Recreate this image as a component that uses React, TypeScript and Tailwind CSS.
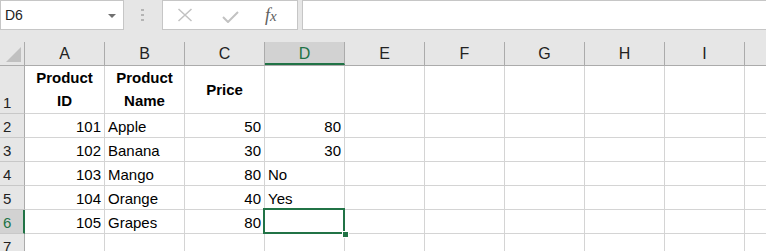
import React from "react";

const FONT = { fontFamily: '"Liberation Sans", Arial, sans-serif' };

const colLetters = ["A", "B", "C", "D", "E", "F", "G", "H", "I", ""];

type Cell = { v?: string; align?: "l" | "r"; bold?: boolean };

const rows: Cell[][] = [
  [{ v: "101", align: "r" }, { v: "Apple" }, { v: "50", align: "r" }, { v: "80", align: "r" }],
  [{ v: "102", align: "r" }, { v: "Banana" }, { v: "30", align: "r" }, { v: "30", align: "r" }],
  [{ v: "103", align: "r" }, { v: "Mango" }, { v: "80", align: "r" }, { v: "No" }],
  [{ v: "104", align: "r" }, { v: "Orange" }, { v: "40", align: "r" }, { v: "Yes" }],
  [{ v: "105", align: "r" }, { v: "Grapes" }, { v: "80", align: "r" }, {}],
];

function RowHeader({ n, sel, h }: { n: string; sel?: boolean; h: string }) {
  return (
    <div
      className={`${h} w-[25px] shrink-0 flex items-end pl-[3px] pb-[1px] text-[15px] leading-[18px] border-b border-[#c8c8c8] ${
        sel ? "bg-[#d2d2d2] text-[#217346] border-r-2 border-r-[#217346]" : "bg-[#e6e6e6] text-[#222] border-r border-r-[#ababab]"
      }`}
    >
      {n}
    </div>
  );
}

function GridCell({ c, selected }: { c?: Cell; selected?: boolean }) {
  return (
    <div
      className={`relative w-[80px] shrink-0 h-full border-r border-b border-[#d4d4d4] flex items-end px-[3px] pb-[1px] text-[15px] leading-[18px] text-black ${
        c?.align === "r" ? "justify-end" : "justify-start"
      } ${selected ? "z-10" : ""}`}
    >
      {c?.v}
      {selected && (
        <>
          <div className="absolute left-[-2px] top-[-2px] w-[82px] h-[26px] border-2 border-[#217346]" />
          <div className="absolute right-[-5px] bottom-[-5px] w-[7px] h-[7px] bg-[#217346] border border-white" />
        </>
      )}
    </div>
  );
}

export default function App() {
  return (
    <div className="w-[766px] h-[251px] overflow-hidden bg-white select-none" style={FONT}>
      {/* Formula bar area */}
      <div className="h-[42px] bg-[#e6e6e6] flex items-start">
        <div className="relative w-[124px] h-[30px] bg-white border border-[#c6c6c6] flex items-center pl-[4px] text-[14px] text-[#222]">
          D6
          <svg className="absolute left-[107px] top-[13px]" width="8" height="4" viewBox="0 0 8 4">
            <polygon points="0,0 8,0 4,4" fill="#707070" />
          </svg>
        </div>
        <div className="w-[38px] h-[30px] flex flex-col items-center justify-center gap-[3px] pr-[2px]">
          <div className="w-[3px] h-[2px] bg-[#b4b4b4]" />
          <div className="w-[3px] h-[2px] bg-[#b4b4b4]" />
          <div className="w-[3px] h-[2px] bg-[#b4b4b4]" />
        </div>
        <div className="w-[136px] h-[30px] bg-white border border-[#c6c6c6] flex items-center">
          <svg className="ml-[14px]" width="16" height="14" viewBox="0 0 16 14">
            <path d="M1.5 1 L14.5 13 M14.5 1 L1.5 13" stroke="#c2c2c2" strokeWidth="1.5" fill="none" />
          </svg>
          <svg className="ml-[29px] mt-[3px]" width="17" height="12" viewBox="0 0 17 12">
            <path d="M1 6 L6 11 L16 1" stroke="#c2c2c2" strokeWidth="2" fill="none" />
          </svg>
          <span
            className="ml-[26px] text-[18px] italic text-[#606060] leading-none"
            style={{ fontFamily: '"Liberation Serif", "Times New Roman", serif' }}
          >
            f<span className="text-[15px]">x</span>
          </span>
        </div>
        <div className="ml-[4px] flex-1 h-[30px] bg-white border border-[#c6c6c6] border-r-0" />
      </div>

      {/* Column headers */}
      <div className="flex h-[24px] bg-[#e6e6e6] border-b border-[#ababab]">
        <div className="w-[25px] shrink-0 h-full border-r border-[#ababab] relative">
          <svg className="absolute left-0 top-0" width="24" height="23" viewBox="0 0 24 23">
            <polygon points="21,5 21,20 6,20" fill="#c0c0c0" />
          </svg>
        </div>
        {colLetters.map((l, i) => (
          <div
            key={i}
            className={`w-[80px] shrink-0 h-full border-r border-[#ababab] flex items-center justify-center text-[16px] ${
              l === "D" ? "bg-[#d2d2d2] text-[#217346] border-b-2 border-b-[#217346] pt-[2px]" : "text-[#222]"
            }`}
          >
            {l}
          </div>
        ))}
      </div>

      {/* Row 1 */}
      <div className="flex h-[48px]">
        <RowHeader n="1" h="h-[48px]" />
        <div className="w-[80px] shrink-0 h-full border-r border-b border-[#d4d4d4] flex items-end justify-center pb-[1px] text-[15px] leading-[23px] font-bold text-black text-center">
          Product<br />ID
        </div>
        <div className="w-[80px] shrink-0 h-full border-r border-b border-[#d4d4d4] flex items-end justify-center pb-[1px] text-[15px] leading-[23px] font-bold text-black text-center">
          Product<br />Name
        </div>
        <div className="w-[80px] shrink-0 h-full border-r border-b border-[#d4d4d4] flex items-center justify-center text-[15px] leading-[18px] font-bold text-black">
          Price
        </div>
        {Array.from({ length: 7 }).map((_, i) => (
          <GridCell key={i} />
        ))}
      </div>

      {rows.map((r, ri) => (
        <div key={ri} className="flex h-[24px]">
          <RowHeader n={String(ri + 2)} h="h-[24px]" sel={ri === 4} />
          {Array.from({ length: 10 }).map((_, ci) => (
            <GridCell key={ci} c={r[ci]} selected={ri === 4 && ci === 3} />
          ))}
        </div>
      ))}

      <div className="flex h-[24px]">
        <RowHeader n="7" h="h-[24px]" />
        {Array.from({ length: 10 }).map((_, ci) => (
          <GridCell key={ci} />
        ))}
      </div>
    </div>
  );
}
